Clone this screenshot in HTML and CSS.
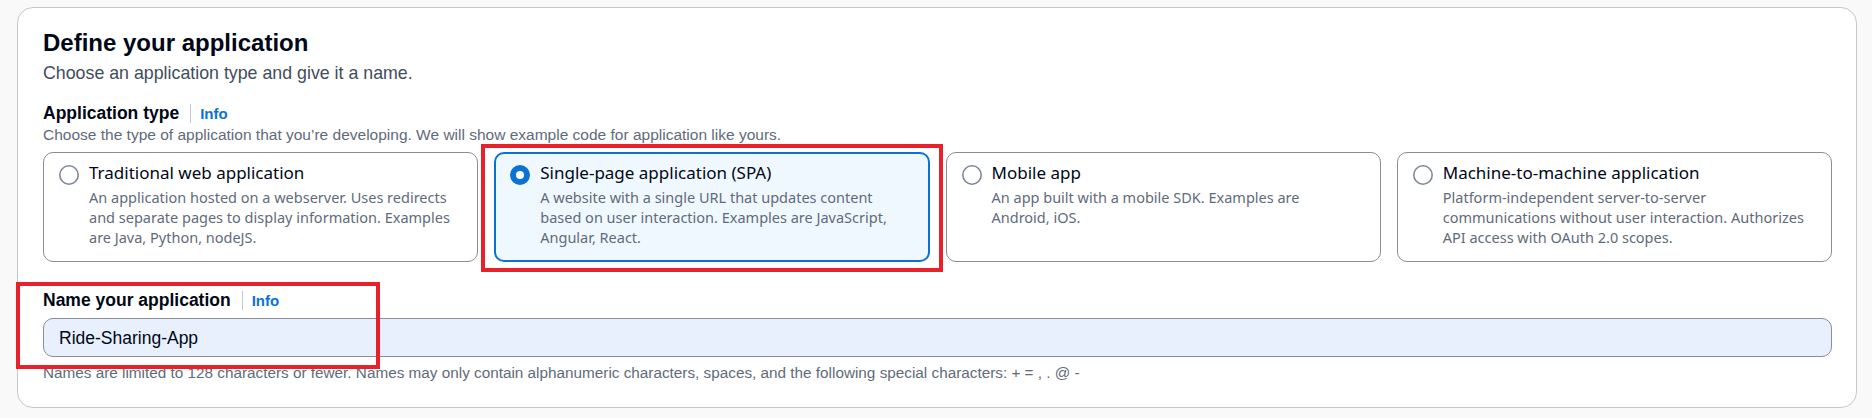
FILE: index.html
```html
<!DOCTYPE html>
<html lang="en">
<head>
<meta charset="utf-8">
<title>Define your application</title>
<link rel="stylesheet" href="styles.css">
</head>
<body>
<div class="page">
  <section class="card">
    <h2 class="title">Define your application</h2>
    <p class="subtitle">Choose an application type and give it a name.</p>

    <div class="field">
      <div class="label-row">
        <span class="label">Application type</span>
        <span class="sep"></span>
        <a class="info" href="#">Info</a>
      </div>
      <p class="constraint">Choose the type of application that you’re developing. We will show example code for application like yours.</p>
      <div class="tiles">
        <div class="tile">
          <svg class="radio" width="20" height="20" viewBox="0 0 20 20"><circle cx="10" cy="10" r="9.2" fill="#fff" stroke="#7d8998" stroke-width="1.6"/></svg>
          <div class="tile-text">
            <div class="tile-title">Traditional web application</div>
            <div class="tile-desc">An application hosted on a webserver. Uses redirects and separate pages to display information. Examples are Java, Python, nodeJS.</div>
          </div>
        </div>
        <div class="tile selected">
          <svg class="radio" width="20" height="20" viewBox="0 0 20 20"><circle cx="10" cy="10" r="7" fill="#fff" stroke="#0972d3" stroke-width="6"/></svg>
          <div class="tile-text">
            <div class="tile-title">Single-page application (SPA)</div>
            <div class="tile-desc">A website with a single URL that updates content based on user interaction. Examples are JavaScript, Angular, React.</div>
          </div>
        </div>
        <div class="tile">
          <svg class="radio" width="20" height="20" viewBox="0 0 20 20"><circle cx="10" cy="10" r="9.2" fill="#fff" stroke="#7d8998" stroke-width="1.6"/></svg>
          <div class="tile-text">
            <div class="tile-title">Mobile app</div>
            <div class="tile-desc">An app built with a mobile SDK. Examples are Android, iOS.</div>
          </div>
        </div>
        <div class="tile">
          <svg class="radio" width="20" height="20" viewBox="0 0 20 20"><circle cx="10" cy="10" r="9.2" fill="#fff" stroke="#7d8998" stroke-width="1.6"/></svg>
          <div class="tile-text">
            <div class="tile-title">Machine-to-machine application</div>
            <div class="tile-desc">Platform-independent server-to-server communications without user interaction. Authorizes API access with OAuth 2.0 scopes.</div>
          </div>
        </div>
      </div>
    </div>

    <div class="field name-field">
      <div class="label-row">
        <span class="label">Name your application</span>
        <span class="sep"></span>
        <a class="info" href="#">Info</a>
      </div>
      <div class="input">Ride-Sharing-App</div>
      <p class="constraint hint">Names are limited to 128 characters or fewer. Names may only contain alphanumeric characters, spaces, and the following special characters: + = , . @ -</p>
    </div>
  </section>

  <div class="mark mark-spa"></div>
  <div class="mark mark-name"></div>
</div>
</body>
</html>
```
FILE: styles.css
```css
* { box-sizing: border-box; }

html, body {
  margin: 0;
  background: #f9f9f9;
}

.page {
  position: relative;
  padding: 7px 15px 10px 17px;
  font-family: "Liberation Sans", Arial, sans-serif;
  color: #000716;
}

.card {
  background: #ffffff;
  border: 1px solid #c6c6cd;
  border-radius: 16px;
  padding: 20px 24px 24px 25px;
}

.title {
  margin: 0;
  font-size: 24px;
  line-height: 30px;
  font-weight: 700;
  color: #000716;
}

.subtitle {
  margin: 4px 0 0;
  font-size: 17.8px;
  line-height: 22px;
  color: #414d5c;
}

.field { margin-top: 18px; }
.name-field { margin-top: 27px; }

.label-row {
  display: flex;
  align-items: center;
  height: 22px;
}

.label {
  font-size: 17.5px;
  line-height: 22px;
  font-weight: 700;
  color: #000716;
}

.sep {
  width: 1px;
  height: 19px;
  background: #c6c6cd;
  margin: 0 9px 0 11px;
}

.info {
  font-size: 15px;
  font-weight: 700;
  color: #0972d3;
  text-decoration: none;
}

.constraint {
  margin: 1px 0 0;
  font-size: 15.5px;
  line-height: 20px;
  color: #5f6b7a;
}

.tiles {
  margin-top: 7px;
  display: grid;
  grid-template-columns: repeat(4, 1fr);
  gap: 16px;
}

.tile {
  display: flex;
  align-items: flex-start;
  gap: 10px;
  border: 1px solid #8c8c94;
  border-radius: 10px;
  padding: 9px 20px 14px 15px;
  background: #ffffff;
  font-family: "Noto Sans", "Open Sans", sans-serif;
}

.tile.selected {
  border: 2px solid #0972d3;
  background: #f0f8ff;
  padding: 8px 19px 13px 14px;
}

.radio {
  flex: none;
  margin-top: 3px;
}

.tile-title {
  font-size: 17px;
  line-height: 22px;
  color: #000716;
}

.tile-desc {
  margin-top: 3px;
  font-size: 14.5px;
  line-height: 20px;
  color: #5f6b7a;
}

.input {
  margin-top: 7px;
  height: 39px;
  border: 1px solid #8c8c94;
  border-radius: 10px;
  background: #e8f0fe;
  padding: 7.5px 15px;
  font-size: 17.5px;
  line-height: 22px;
  color: #000716;
}

.hint {
  margin-top: 6px;
  font-size: 15.3px;
}

.mark {
  position: absolute;
  border: 4px solid #e8202a;
  pointer-events: none;
}

.mark-spa {
  left: 481px;
  top: 144px;
  width: 462px;
  height: 128px;
}

.mark-name {
  left: 16px;
  top: 282px;
  width: 364px;
  height: 87px;
}
```
